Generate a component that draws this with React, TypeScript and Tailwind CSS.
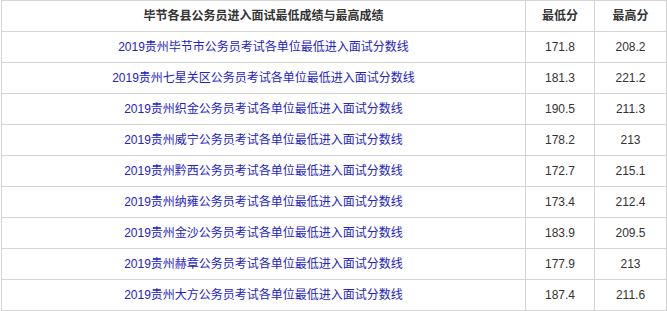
const rows = [
  ["2019贵州毕节市公务员考试各单位最低进入面试分数线", "171.8", "208.2"],
  ["2019贵州七星关区公务员考试各单位最低进入面试分数线", "181.3", "221.2"],
  ["2019贵州织金公务员考试各单位最低进入面试分数线", "190.5", "211.3"],
  ["2019贵州威宁公务员考试各单位最低进入面试分数线", "178.2", "213"],
  ["2019贵州黔西公务员考试各单位最低进入面试分数线", "172.7", "215.1"],
  ["2019贵州纳雍公务员考试各单位最低进入面试分数线", "173.4", "212.4"],
  ["2019贵州金沙公务员考试各单位最低进入面试分数线", "183.9", "209.5"],
  ["2019贵州赫章公务员考试各单位最低进入面试分数线", "177.9", "213"],
  ["2019贵州大方公务员考试各单位最低进入面试分数线", "187.4", "211.6"],
];

export default function App() {
  return (
    <div className="bg-white w-[667px] h-[311px] overflow-hidden">
      <table
        className="border-collapse w-[666px] ml-[1px] text-[12px] text-[#333]"
        style={{ fontFamily: '"Liberation Sans", "Noto Sans CJK SC", sans-serif' }}
      >
        <thead>
          <tr className="h-[31px]">
            <th className="border border-[#d4d4d4] w-[524px] font-bold text-center">
              毕节各县公务员进入面试最低成绩与最高成绩
            </th>
            <th className="border border-[#d4d4d4] w-[69px] font-bold text-center">最低分</th>
            <th className="border border-[#d4d4d4] font-bold text-center">最高分</th>
          </tr>
        </thead>
        <tbody>
          {rows.map(([name, low, high]) => (
            <tr key={name} className="h-[31px]">
              <td className="border border-[#d4d4d4] text-center text-[#2323c8]">{name}</td>
              <td className="border border-[#d4d4d4] text-center">{low}</td>
              <td className="border border-[#d4d4d4] text-center">{high}</td>
            </tr>
          ))}
        </tbody>
      </table>
    </div>
  );
}
